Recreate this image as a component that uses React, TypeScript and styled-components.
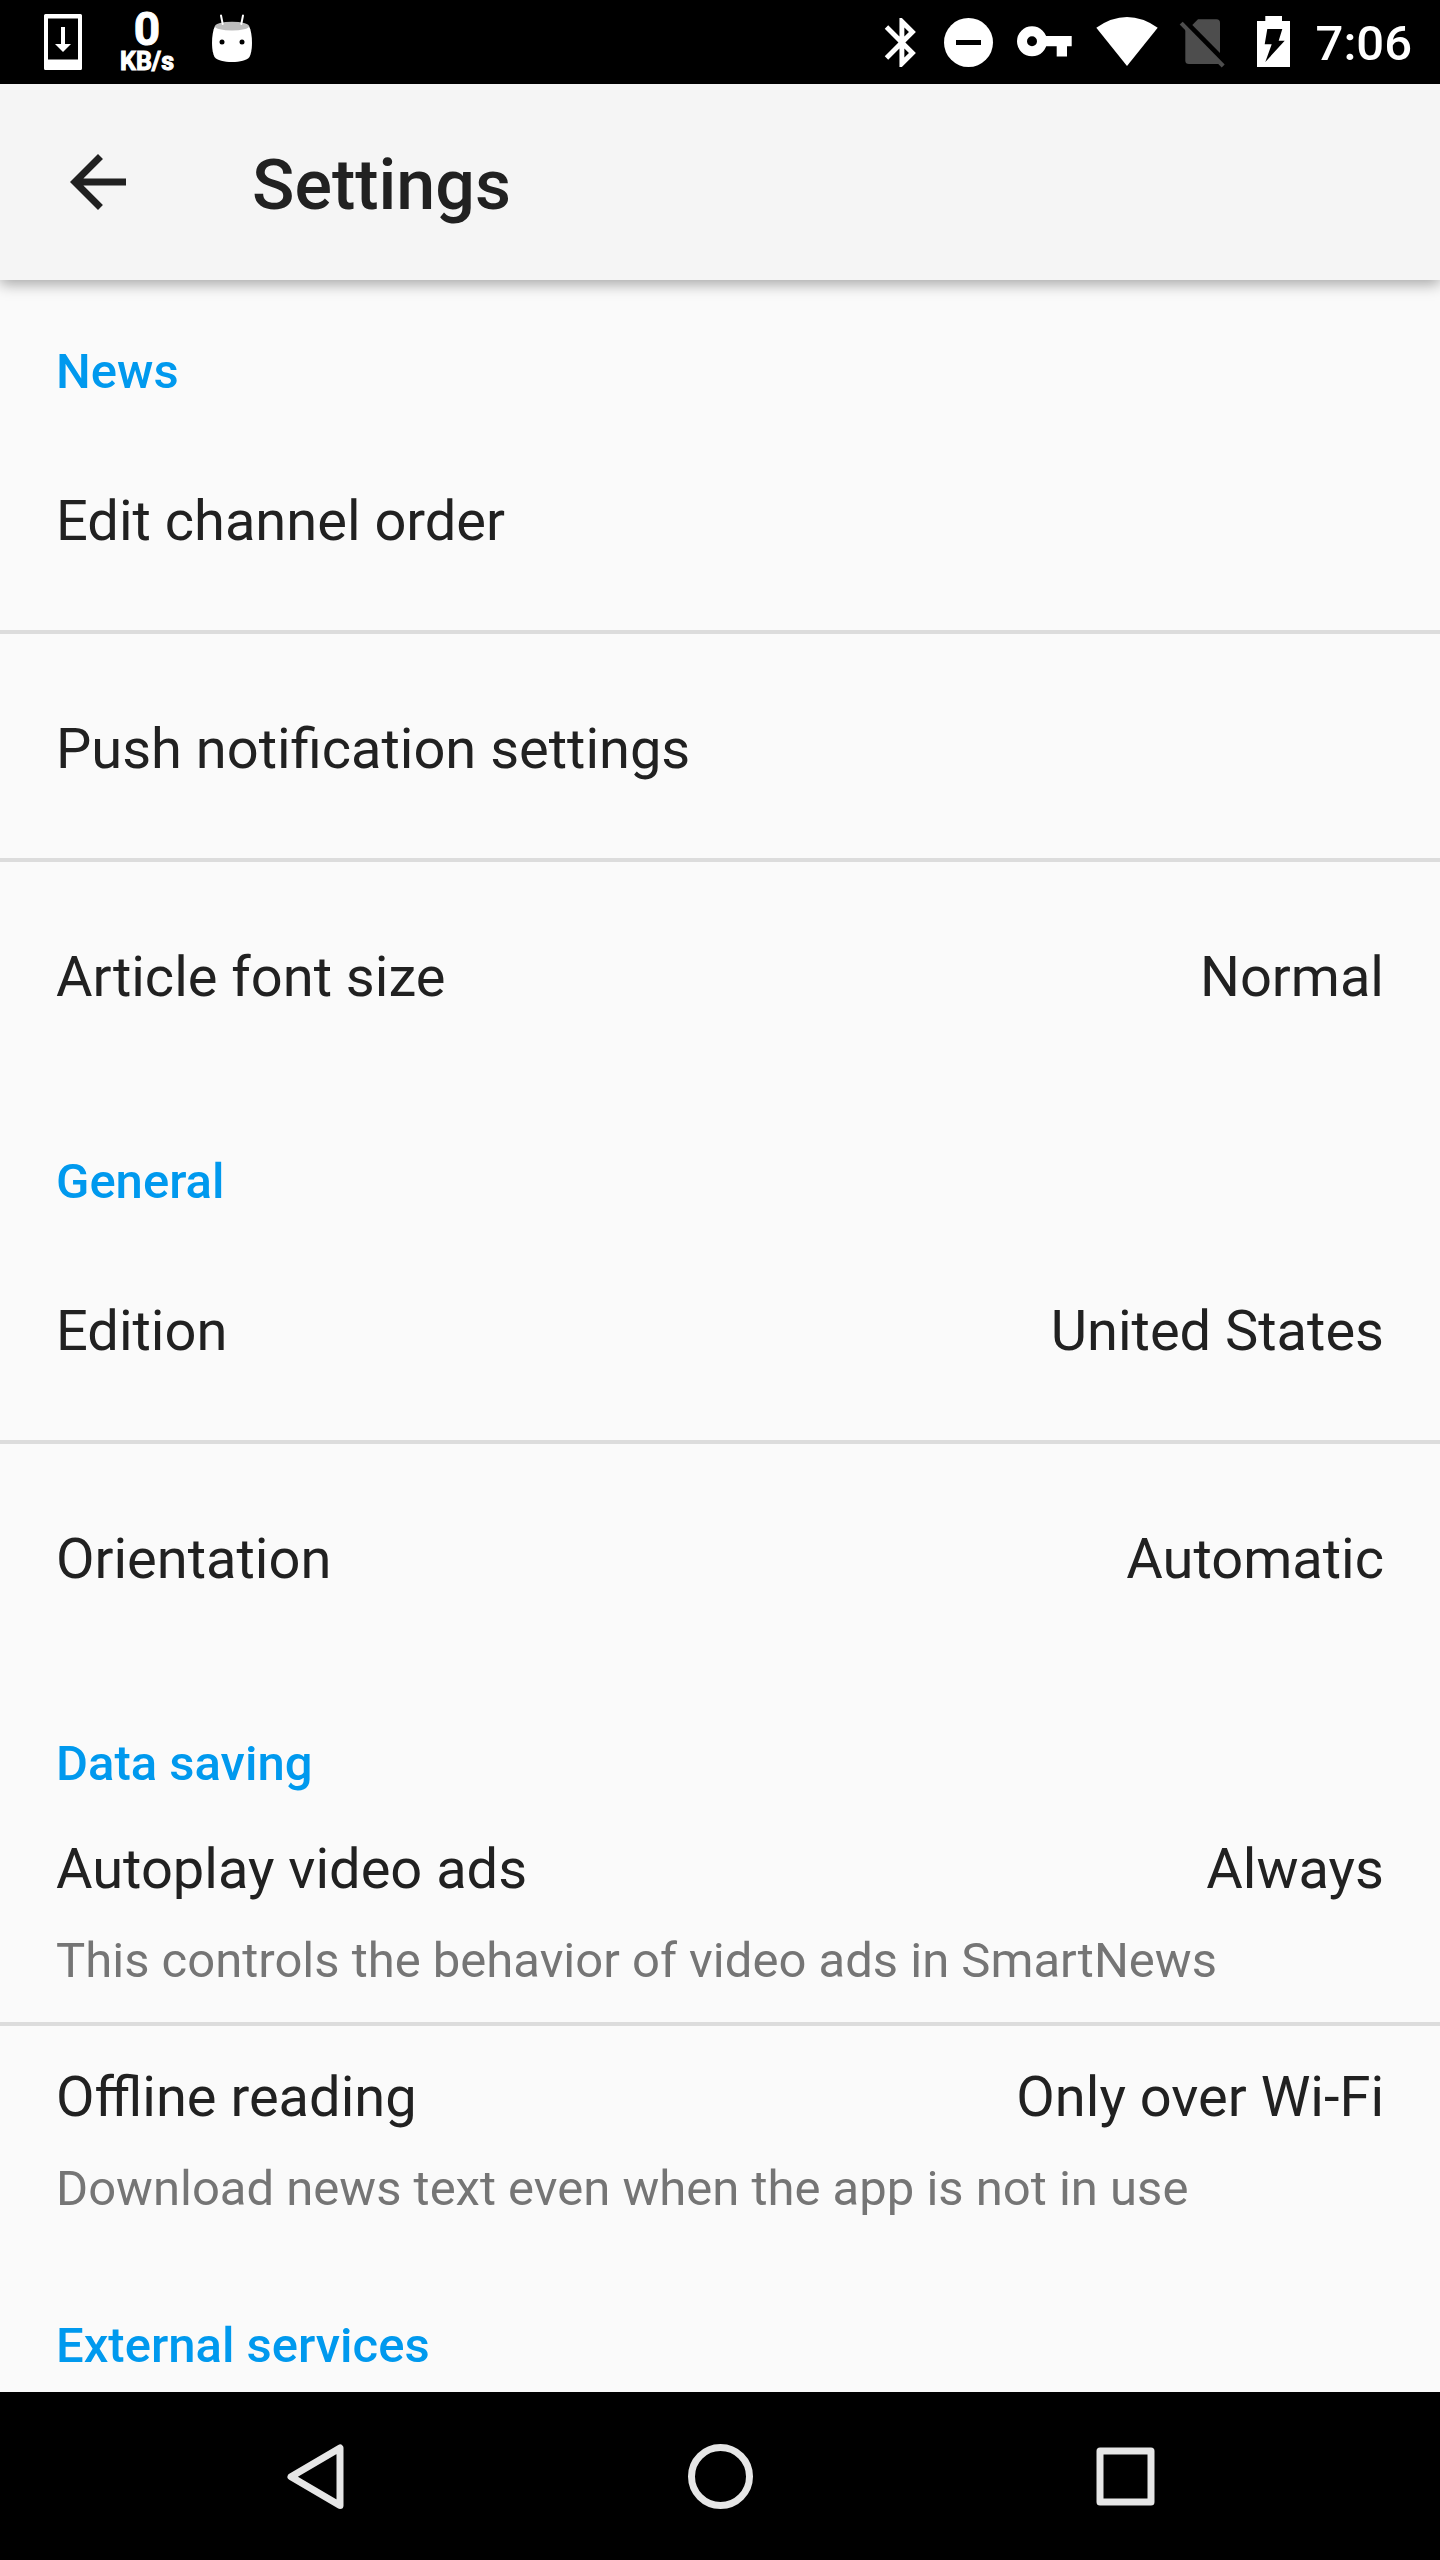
import React from "react";
import styled, { createGlobalStyle } from "styled-components";

const GlobalStyle = createGlobalStyle`
  *, *::before, *::after { box-sizing: border-box; }
  body {
    margin: 0;
    background: #fafafa;
    color: #212121;
    font-family: Roboto, "Noto Sans", sans-serif;
  }
`;

const Screen = styled.div`
  display: flex;
  flex-direction: column;
  min-height: 100vh;
`;

const StatusBar = styled.div`
  display: flex;
  justify-content: space-between;
  height: 84px;
  padding: 0 28px 0 44px;
  background: #000;
  color: #fff;
`;

const StatusGroup = styled.div<{ $gap: number }>`
  display: flex;
  align-items: center;
  gap: ${(p) => p.$gap}px;

  svg {
    display: block;
    flex: none;
  }
`;

const NetworkSpeed = styled.div`
  display: flex;
  flex-direction: column;
  align-items: center;
  font-weight: 700;
  -webkit-text-stroke: 1px #fff;
`;

const SpeedValue = styled.span`
  font-size: 46px;
  line-height: 40px;
`;

const SpeedUnit = styled.span`
  font-size: 25px;
  line-height: 26px;
`;

const Clock = styled.time`
  padding: 4px 0 0 4px;
  font-size: 49px;
  font-weight: 500;
  line-height: 58px;
`;

const Toolbar = styled.header`
  position: relative;
  display: flex;
  align-items: center;
  gap: 112px;
  height: 196px;
  padding: 0 56px;
  background: #f5f5f5;
  box-shadow: 0 4px 14px rgba(0, 0, 0, 0.35);
`;

const BackButton = styled.button`
  width: 84px;
  height: 84px;
  padding: 0;
  border: 0;
  background: none;
  color: inherit;

  svg {
    display: block;
  }
`;

const Title = styled.h1`
  margin: 0;
  padding-top: 6px;
  font-size: 70px;
  font-weight: 500;
  line-height: 82px;
`;

const Content = styled.main`
  flex: 1;
`;

const SectionTitle = styled.h2`
  margin: 0;
  padding: 63px 56px 5px;
  color: #0099ee;
  font-size: 49px;
  font-weight: 500;
  line-height: 58px;
`;

const List = styled.ul`
  margin: 0;
  padding: 0;
  list-style: none;
`;

const Item = styled.li`
  border-bottom: 4px solid #dcdcdc;

  &:last-child {
    border-bottom-color: transparent;
  }
`;

const Row = styled.button`
  display: flex;
  flex-direction: column;
  justify-content: center;
  gap: 30px;
  width: 100%;
  min-height: 224px;
  padding: 6px 56px 0;
  border: 0;
  background: none;
  color: inherit;
  font: inherit;
  text-align: left;
`;

const RowLine = styled.span`
  display: flex;
  justify-content: space-between;
  gap: 56px;
  width: 100%;
  font-size: 56px;
  line-height: 66px;
`;

const Summary = styled.span`
  color: #757575;
  font-size: 49px;
  line-height: 58px;
`;

const NavBar = styled.nav`
  display: flex;
  justify-content: space-between;
  height: 168px;
  padding: 0 175px;
  background: #000;
`;

const NavButton = styled.button`
  display: flex;
  align-items: center;
  justify-content: center;
  width: 280px;
  padding: 0;
  border: 0;
  background: none;
  color: #e6e6e6;
`;

const DownloadIcon = () => (
  <svg width="38" height="84" viewBox="0 0 38 84" fill="#fff" aria-hidden="true">
    <path
      fillRule="evenodd"
      d="M1.5 14h35a1.5 1.5 0 0 1 1.5 1.5v53a1.5 1.5 0 0 1-1.5 1.5h-35A1.5 1.5 0 0 1 0 68.500v-53A1.5 1.5 0 0 1 1.500 14zM4 18.500V59.500H34V18.500z"
    />
    <path d="M17 27h4v17h6l-8 8-8-8h6z" />
  </svg>
);

const RobotIcon = () => (
  <svg width="40" height="84" viewBox="0 0 40 84" aria-hidden="true">
    <path
      d="M3 26H37C39 30 40 36 40 43C40 49 39 54 37.500 57C35 60.500 28 62 20 62S5 60.500 2.500 57C1 54 0 49 0 43C0 36 1 30 3 26z"
      fill="#fff"
    />
    <ellipse cx="20" cy="26.200" rx="17" ry="4.400" fill="#bdbdbd" />
    <path d="M9 15.500L10.700 24M31 15.500L29.300 24" stroke="#fff" strokeWidth="2" strokeLinecap="round" />
    <circle cx="10" cy="42" r="2.500" />
    <circle cx="30" cy="42" r="2.500" />
  </svg>
);

const BluetoothIcon = () => (
  <svg width="40" height="84" viewBox="0 0 40 84" fill="#fff" aria-hidden="true">
    <path
      transform="translate(-11.500 13.100) scale(2.450)"
      d="M17.710 7.710L12 2h-1v7.590L6.410 5 5 6.410 10.590 12 5 17.590 6.410 19 11 14.410V22h1l5.710-5.710-4.300-4.290 4.300-4.290zM13 5.830l1.880 1.880L13 9.590V5.830zm1.880 10.460L13 18.170v-3.760l1.880 1.880z"
    />
  </svg>
);

const DoNotDisturbIcon = () => (
  <svg width="50" height="84" viewBox="0 0 50 84" aria-hidden="true">
    <circle cx="24.500" cy="42.500" r="24.500" fill="#fff" />
    <path d="M12 40h25v5H12z" />
  </svg>
);

const KeyIcon = () => (
  <svg width="62" height="84" viewBox="0 0 62 84" fill="#fff" aria-hidden="true">
    <circle cx="18" cy="41.300" r="10" fill="none" stroke="#fff" strokeWidth="10" />
    <path d="M31 36H57.700V46.300H53V56.500H42.700V46.300H31z" />
  </svg>
);

const WifiIcon = () => (
  <svg width="62" height="84" viewBox="0 0 62 84" fill="#fff" aria-hidden="true">
    <path d="M.300 27.700Q31 6.300 61.700 27.700L31 66z" />
  </svg>
);

const NoSimIcon = () => (
  <svg width="54" height="84" viewBox="0 0 54 84" fill="#4d4d4d" aria-hidden="true">
    <path d="M14.300 25L20 19.300H38.500Q42 19.300 42 23V53z" />
    <path d="M7.300 27V60.500Q7.300 64 11 64H43.500z" />
    <path d="M1.700 24.500L4.700 21.700 46.700 64.500 43.700 67.500z" />
  </svg>
);

const BatteryIcon = () => (
  <svg width="40" height="84" viewBox="0 0 40 84" aria-hidden="true">
    <path d="M13.300 16H30V21H38V67H5V21H13.300z" fill="#fff" />
    <path d="M15.300 29H30.300L26.700 40.700H32.700L13.300 62 19.700 44.300H12.700z" />
  </svg>
);

const ArrowBackIcon = () => (
  <svg width="84" height="84" viewBox="0 0 24 24" fill="currentColor" aria-hidden="true">
    <path d="M20 11H7.830l5.590-5.590L12 4l-8 8 8 8 1.410-1.410L7.830 13H20v-2z" />
  </svg>
);

const navStroke = {
  width: 84,
  height: 84,
  viewBox: "0 0 84 84",
  fill: "none",
  stroke: "currentColor",
  strokeWidth: 7,
  strokeLinejoin: "round" as const,
  "aria-hidden": true,
};

type Setting = { label: string; value?: string; summary?: string };
type Section = { title: string; items: Setting[] };

const sections: Section[] = [
  {
    title: "News",
    items: [
      { label: "Edit channel order" },
      { label: "Push notification settings" },
      { label: "Article font size", value: "Normal" },
    ],
  },
  {
    title: "General",
    items: [
      { label: "Edition", value: "United States" },
      { label: "Orientation", value: "Automatic" },
    ],
  },
  {
    title: "Data saving",
    items: [
      {
        label: "Autoplay video ads",
        value: "Always",
        summary: "This controls the behavior of video ads in SmartNews",
      },
      {
        label: "Offline reading",
        value: "Only over Wi-Fi",
        summary: "Download news text even when the app is not in use",
      },
    ],
  },
  { title: "External services", items: [] },
];

export default function App() {
  return (
    <>
      <GlobalStyle />
      <Screen>
        <StatusBar>
          <StatusGroup $gap={38}>
            <DownloadIcon />
            <NetworkSpeed>
              <SpeedValue>0</SpeedValue>
              <SpeedUnit>KB/s</SpeedUnit>
            </NetworkSpeed>
            <RobotIcon />
          </StatusGroup>
          <StatusGroup $gap={20}>
            <BluetoothIcon />
            <DoNotDisturbIcon />
            <KeyIcon />
            <WifiIcon />
            <NoSimIcon />
            <BatteryIcon />
            <Clock>7:06</Clock>
          </StatusGroup>
        </StatusBar>

        <Toolbar>
          <BackButton type="button" aria-label="Back">
            <ArrowBackIcon />
          </BackButton>
          <Title>Settings</Title>
        </Toolbar>

        <Content>
          {sections.map((section) => (
            <section key={section.title}>
              <SectionTitle>{section.title}</SectionTitle>
              {section.items.length > 0 && (
                <List>
                  {section.items.map((item) => (
                    <Item key={item.label}>
                      <Row type="button">
                        <RowLine>
                          <span>{item.label}</span>
                          {item.value && <span>{item.value}</span>}
                        </RowLine>
                        {item.summary && <Summary>{item.summary}</Summary>}
                      </Row>
                    </Item>
                  ))}
                </List>
              )}
            </section>
          ))}
        </Content>

        <NavBar aria-label="System">
          <NavButton type="button" aria-label="Back">
            <svg {...navStroke}>
              <path d="M67 14V71.500L18 42.700z" />
            </svg>
          </NavButton>
          <NavButton type="button" aria-label="Home">
            <svg {...navStroke}>
              <circle cx="42.500" cy="42.500" r="29" />
            </svg>
          </NavButton>
          <NavButton type="button" aria-label="Recent apps">
            <svg {...navStroke}>
              <rect x="17" y="17" width="51" height="51" />
            </svg>
          </NavButton>
        </NavBar>
      </Screen>
    </>
  );
}
